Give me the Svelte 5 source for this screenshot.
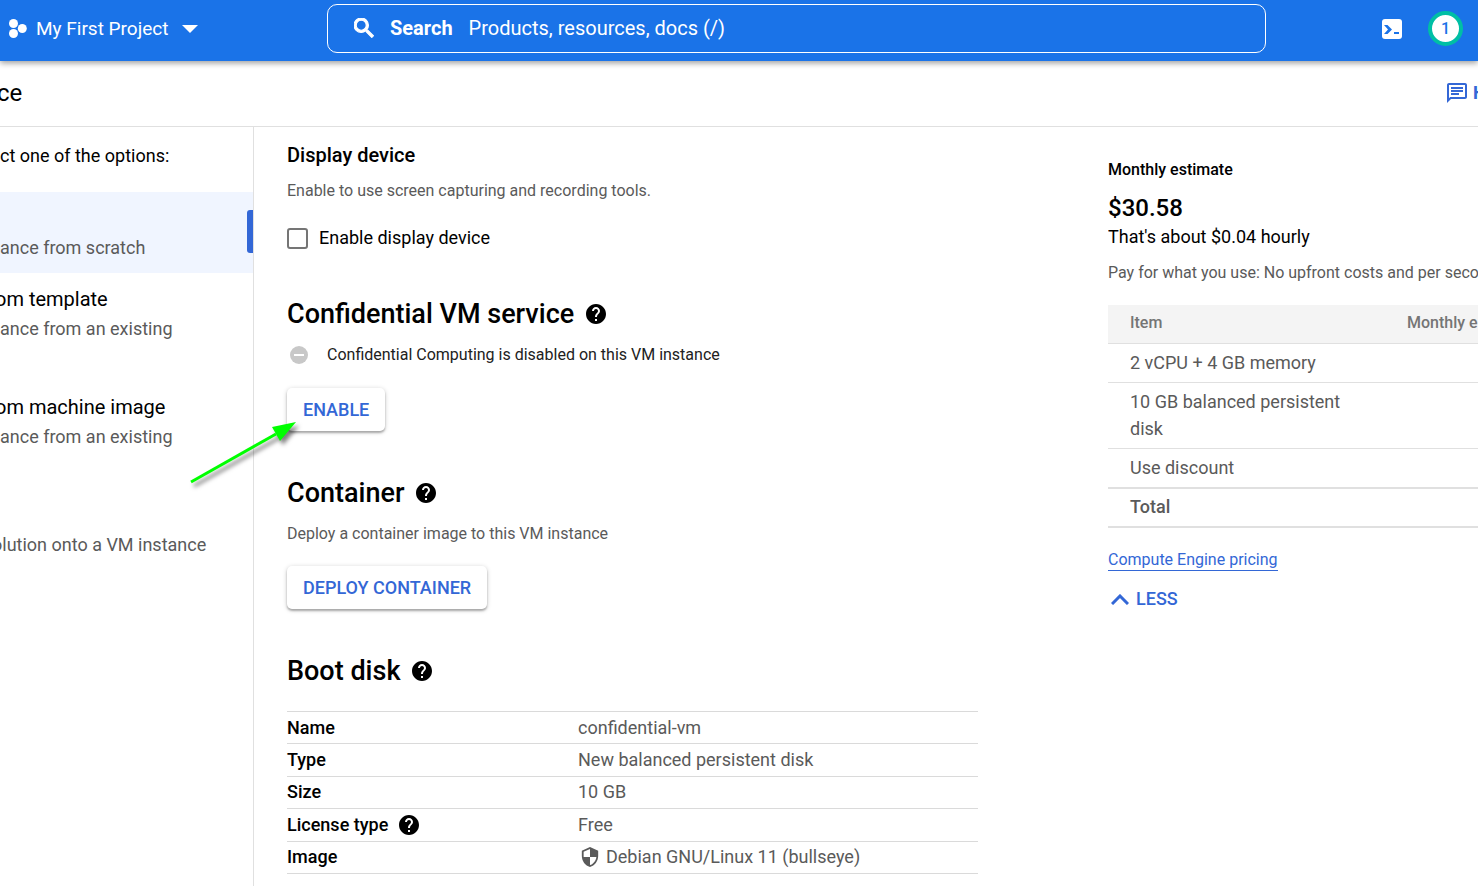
<script>
    let displayDevice = $state(false)

    const options = [
        { title: '', text: 'ance from scratch', active: true },
        { title: 'om template', text: 'ance from an existing' },
        { title: 'om machine image', text: 'ance from an existing' },
        { title: '', text: 'olution onto a VM instance', cut: true }
    ]

    const disk = [
        { label: 'Name', value: 'confidential-vm' },
        { label: 'Type', value: 'New balanced persistent disk' },
        { label: 'Size', value: '10 GB' },
        { label: 'License type', value: 'Free', help: true },
        { label: 'Image', value: 'Debian GNU/Linux 11 (bullseye)', shield: true }
    ]

    const costs = ['2 vCPU + 4 GB memory', '10 GB balanced persistent disk', 'Use discount']
</script>

{#snippet help()}
    <svg class='help' viewBox='2 2 20 20' aria-hidden='true'>
        <path d='M12 2C6.48 2 2 6.48 2 12s4.48 10 10 10 10-4.48 10-10S17.52 2 12 2zm1 17h-2v-2h2v2zm2.07-7.75l-.9.92C13.45 12.9 13 13.5 13 15h-2v-.5c0-1.1.45-2.1 1.17-2.83l1.24-1.26c.37-.36.59-.86.59-1.41 0-1.1-.9-2-2-2s-2 .9-2 2H8c0-2.21 1.79-4 4-4s4 1.79 4 4c0 .88-.36 1.68-.93 2.25z' />
    </svg>
{/snippet}

<div class='page'>
    <header class='topbar'>
        <div class='topbar_left'>
            <button class='project' type='button'>
                <svg width='20' height='22' viewBox='0 0 20 22' aria-hidden='true'>
                    <circle cx='5.5' cy='5.5' r='4.5' />
                    <circle cx='5.5' cy='15.5' r='4.5' />
                    <circle cx='14.3' cy='10.5' r='4.5' />
                </svg>
                <span>My First Project</span>
                <svg class='caret' width='16' height='8' viewBox='0 0 16 8' aria-hidden='true'>
                    <path d='M0 0h16L8 8z' />
                </svg>
            </button>
        </div>
        <label class='search'>
            <svg width='20' height='20' viewBox='3 3 18 18' aria-hidden='true'>
                <path d='M15.5 14h-.79l-.28-.27A6.47 6.47 0 0 0 16 9.5 6.5 6.5 0 1 0 9.5 16c1.61 0 3.09-.59 4.23-1.57l.27.28v.79l5 4.99L20.49 19l-4.99-5zm-6 0C7.01 14 5 11.99 5 9.5S7.01 5 9.5 5 14 7.01 14 9.5 11.99 14 9.5 14z' />
            </svg>
            <b>Search</b>
            <input type='text' placeholder='Products, resources, docs (/)' />
        </label>
        <div class='topbar_right'>
            <button class='shell' type='button' aria-label='Cloud Shell'>
                <svg width='20' height='20' viewBox='0 0 20 20' aria-hidden='true'>
                    <rect width='20' height='20' rx='3' />
                    <path class='prompt' d='M2 6h3.5l4.5 4.5L5.5 15H2l4-4.5z' />
                    <path class='prompt' d='M12 13h5v2h-5z' />
                </svg>
            </button>
            <button class='badge' type='button'>1</button>
        </div>
    </header>

    <div class='titlebar'>
        <h1>ce</h1>
        <button class='assistant' type='button'>
            <svg width='20' height='20' viewBox='2 2 20 20' aria-hidden='true'>
                <path d='M4 4h16v12H5.17L4 17.17V4m0-2c-1.1 0-1.99.9-1.99 2L2 22l4-4h14c1.1 0 2-.9 2-2V4c0-1.1-.9-2-2-2H4zm2 10h8v2H6v-2zm0-3h12v2H6V9zm0-3h12v2H6V6z' />
            </svg>
            <span>H</span>
        </button>
    </div>

    <div class='body'>
        <nav class='sidebar'>
            <p class='intro'>ct one of the options:</p>
            {#each options as option, i (i)}
            <a href='#option' class='option' class:active={option.active}>
                <span class='option_title'>{option.title}</span>
                <span class='option_text' class:cut={option.cut}>{option.text}</span>
            </a>
            {/each}
        </nav>

        <main>
            <section class='display'>
                <h3>Display device</h3>
                <p>Enable to use screen capturing and recording tools.</p>
                <label class='check'>
                    <input type='checkbox' bind:checked={displayDevice} />
                    Enable display device
                </label>
            </section>

            <section class='confidential'>
                <h2>Confidential VM service {@render help()}</h2>
                <p class='status'>
                    <svg width='18' height='18' viewBox='0 0 18 18' aria-hidden='true'>
                        <circle cx='9' cy='9' r='9' />
                        <path d='M4 8h10v2H4z' />
                    </svg>
                    Confidential Computing is disabled on this VM instance
                </p>
                <div class='callout'>
                    <button class='raised' type='button'>ENABLE</button>
                    <svg class='arrow' width='110' height='70' viewBox='0 0 110 70' aria-hidden='true'>
                        <path d='M1 62L86 14' />
                        <polygon points='106,2 82,7 90,21' />
                    </svg>
                </div>
            </section>

            <section class='container'>
                <h2>Container {@render help()}</h2>
                <p>Deploy a container image to this VM instance</p>
                <button class='raised' type='button'>DEPLOY CONTAINER</button>
            </section>

            <section class='boot'>
                <h2>Boot disk {@render help()}</h2>
                <table class='disk'>
                    <tbody>
                        {#each disk as row (row.label)}
                        <tr>
                            <th scope='row'>
                                <div class='cell'>{row.label} {#if row.help}{@render help()}{/if}</div>
                            </th>
                            <td>
                                <div class='cell'>
                                    {#if row.shield}
                                    <svg class='shield' width='24' height='20' viewBox='0 1 24 22' aria-hidden='true'>
                                        <path d='M12 1L3 5v6c0 5.55 3.84 10.74 9 12 5.16-1.26 9-6.45 9-12V5l-9-4zm0 10.99h7c-.53 4.12-3.28 7.79-7 8.94V12H5V6.3l7-3.11v8.8z' />
                                    </svg>
                                    {/if}
                                    {row.value}
                                </div>
                            </td>
                        </tr>
                        {/each}
                    </tbody>
                </table>
            </section>
        </main>

        <aside>
            <h4>Monthly estimate</h4>
            <div class='price'>$30.58</div>
            <div class='hourly'>That's about $0.04 hourly</div>
            <p class='note'>Pay for what you use: No upfront costs and per seco</p>
            <table class='costs'>
                <thead>
                    <tr><th>Item</th><th>Monthly e</th></tr>
                </thead>
                <tbody>
                    {#each costs as item (item)}
                    <tr><td>{item}</td><td></td></tr>
                    {/each}
                </tbody>
                <tfoot>
                    <tr><th scope='row'>Total</th><td></td></tr>
                </tfoot>
            </table>
            <a class='pricing' href='#pricing'>Compute Engine pricing</a>
            <button class='less' type='button'>
                <svg width='18' height='11' viewBox='0 0 18 11' aria-hidden='true'>
                    <path d='M1 10l8-8 8 8' />
                </svg>
                LESS
            </button>
        </aside>
    </div>
</div>

<style>
    :global(body) {
        background: #fff;
    }
    .page {
        height: 100vh;
        display: flex;
        flex-direction: column;
        overflow: hidden;
        color: #000;
        font: 16px/24px Roboto, sans-serif;
    }
    h1, h2, h3, h4, p {
        margin: 0;
        font-weight: 500;
    }
    p {
        font-weight: 400;
        color: #5a5a5a;
    }
    button {
        padding: 0;
        border: 0;
        background: none;
        color: inherit;
        font: inherit;
        cursor: pointer;
    }
    svg {
        flex: none;
        fill: currentColor;
    }

    .topbar {
        position: relative;
        flex: none;
        display: flex;
        align-items: center;
        height: 61px;
        padding-bottom: 4px;
        box-sizing: border-box;
        background: #1a73e8;
        color: #fff;
        font-size: 20px;
        box-shadow: 0 2px 6px rgba(0, 0, 0, .4);
    }
    .topbar_left {
        flex: 0 0 327px;
    }
    .project {
        display: flex;
        align-items: center;
        gap: 8px;
        padding-left: 8px;
        font-size: 19px;
    }
    .caret {
        margin-left: 6px;
    }
    .search {
        flex: 1;
        display: flex;
        align-items: center;
        height: 49px;
        padding: 0 26px 2px;
        box-sizing: border-box;
        border: 1px solid #fff;
        border-radius: 10px;
    }
    .search svg {
        stroke: currentColor;
        stroke-width: 1;
    }
    .search b {
        margin: 0 16px;
        font-weight: 700;
    }
    .search input {
        flex: 1;
        min-width: 0;
        padding: 0;
        border: 0;
        outline: 0;
        background: none;
        color: #fff;
        font: inherit;
    }
    .search input::placeholder {
        color: #fff;
        opacity: 1;
    }
    .topbar_right {
        flex: 0 0 212px;
        display: flex;
        align-items: center;
        justify-content: flex-end;
        gap: 26px;
        padding-right: 15px;
        box-sizing: border-box;
    }
    .shell {
        display: flex;
    }
    .prompt {
        fill: #1a73e8;
    }
    .badge {
        width: 35px;
        height: 35px;
        border: 4px solid #00bfa5;
        border-radius: 50%;
        background: #fff;
        color: #1a73e8;
        font-size: 16px;
        font-weight: 500;
    }

    .titlebar {
        flex: none;
        display: flex;
        align-items: center;
        justify-content: space-between;
        height: 63px;
        padding-bottom: 2px;
        border-bottom: 1px solid #e0e0e0;
    }
    .titlebar h1 {
        margin-left: -3px;
        font-size: 24px;
        font-weight: 400;
    }
    .assistant {
        display: flex;
        align-items: center;
        gap: 6px;
        width: 31px;
        color: #3367d6;
        font-size: 18px;
        font-weight: 700;
    }

    .body {
        flex: 1;
        min-height: 0;
        display: grid;
        grid-template-columns: 254px minmax(0, 1fr) 370px;
    }

    .sidebar {
        border-right: 1px solid #e0e0e0;
        overflow: hidden;
        white-space: nowrap;
    }
    .intro {
        padding: 17px 0 24px;
        color: #000;
        font-size: 18px;
    }
    .option {
        display: flex;
        flex-direction: column;
        height: 108px;
        padding-top: 11px;
        box-sizing: border-box;
        color: #000;
        text-decoration: none;
    }
    .option.active {
        position: relative;
        height: 81px;
        background: #f0f5ff;
    }
    .option.active::after {
        content: '';
        position: absolute;
        top: 18px;
        right: 0;
        width: 6px;
        height: 43px;
        border-radius: 3px 0 0 3px;
        background: #3367d6;
    }
    .option_title {
        height: 30px;
        margin-left: -5px;
        font-size: 20px;
        line-height: 30px;
    }
    .option_text {
        color: #5a5a5a;
        font-size: 18px;
        line-height: 30px;
    }
    .cut {
        margin-left: -8px;
    }

    main {
        padding: 0 130px 0 33px;
    }
    h3 {
        padding-top: 16px;
        font-size: 20px;
    }
    h2 {
        display: flex;
        align-items: center;
        gap: 12px;
        font-size: 27px;
        line-height: 34px;
    }
    .help {
        width: 20px;
        height: 20px;
    }
    .display p {
        margin: 12px 0 23px;
    }
    .check {
        display: flex;
        align-items: center;
        gap: 11px;
        font-size: 18px;
    }
    .check input {
        appearance: none;
        width: 21px;
        height: 21px;
        margin: 0;
        border: 2px solid #757575;
        border-radius: 3px;
    }
    .check input:checked {
        background: #3367d6;
    }
    .confidential {
        padding-top: 47px;
    }
    .status {
        display: flex;
        align-items: center;
        gap: 19px;
        margin: 12px 0 21px;
        padding-left: 3px;
        color: #212121;
    }
    .status circle {
        fill: #c8c8c8;
    }
    .status path {
        fill: #fff;
    }
    .callout {
        position: relative;
    }
    .raised {
        display: block;
        height: 43px;
        padding: 0 16px;
        border-radius: 5px;
        background: #fff;
        color: #3367d6;
        font-size: 18px;
        font-weight: 500;
        box-shadow: 0 2px 2px rgba(0, 0, 0, .25), 0 1px 5px rgba(0, 0, 0, .2);
    }
    .arrow {
        position: absolute;
        top: 32px;
        left: -97px;
        pointer-events: none;
        filter: drop-shadow(3px 4px 2px rgba(0, 0, 0, .5));
    }
    .arrow path {
        stroke: #0f0;
        stroke-width: 3;
    }
    .arrow polygon {
        fill: #0f0;
    }
    .container {
        padding-top: 45px;
    }
    .container p {
        margin: 12px 0 20px;
    }
    .boot {
        padding-top: 45px;
    }
    table {
        border-collapse: collapse;
    }
    th, td {
        padding: 0;
        text-align: left;
    }
    .disk {
        width: 100%;
        height: 163px;
        margin-top: 23px;
        table-layout: fixed;
        border-top: 1px solid #dadada;
        font-size: 18px;
    }
    .disk tr {
        border-bottom: 1px solid #dadada;
    }
    .disk th {
        width: 291px;
        font-weight: 500;
    }
    .disk td {
        color: #5a5a5a;
    }
    .cell {
        display: flex;
        align-items: center;
        gap: 11px;
        height: 30px;
    }
    td .cell {
        gap: 4px;
    }

    aside {
        overflow: hidden;
        padding-top: 31px;
    }
    h4 {
        font-size: 16px;
    }
    .price {
        margin-top: 11px;
        font-size: 24px;
        font-weight: 500;
        line-height: 30px;
    }
    .hourly {
        font-size: 18px;
        line-height: 28px;
    }
    .note {
        margin: 10px 0 20px;
        white-space: nowrap;
    }
    .costs {
        width: 100%;
        table-layout: fixed;
        color: #5a5a5a;
        font-size: 18px;
        line-height: 27px;
    }
    .costs tr {
        border-bottom: 1px solid #e0e0e0;
    }
    .costs tbody tr:last-child, .costs tfoot tr {
        border-bottom-width: 2px;
    }
    .costs th, .costs td {
        padding: 5px 22px 6px;
        font-weight: 400;
    }
    .costs thead th {
        padding: 4px 22px 7px;
        background: #f4f4f4;
        color: #757575;
        font-size: 16px;
        font-weight: 500;
        white-space: nowrap;
    }
    .costs thead th:first-child {
        width: 233px;
    }
    .costs thead th:last-child {
        padding-right: 0;
    }
    .costs tfoot th {
        padding: 4px 22px 6px;
        font-weight: 500;
    }
    .costs tfoot td {
        padding: 0;
    }
    .pricing {
        display: inline-block;
        margin-top: 21px;
        border-bottom: 1px solid #3367d6;
        color: #3367d6;
        line-height: 21px;
        text-decoration: none;
    }
    .less {
        display: flex;
        align-items: center;
        gap: 7px;
        margin-top: 15px;
        padding-left: 3px;
        color: #3367d6;
        font-size: 18px;
        font-weight: 500;
    }
    .less path {
        fill: none;
        stroke: currentColor;
        stroke-width: 3;
    }
</style>
